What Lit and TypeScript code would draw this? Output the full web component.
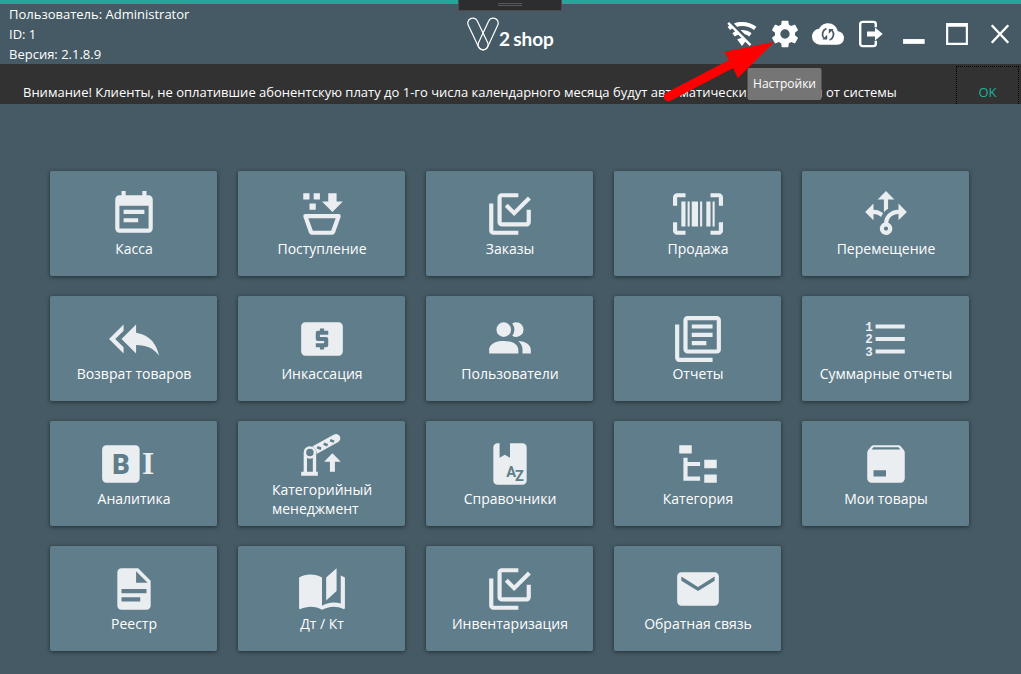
import { LitElement, html, css, svg } from "lit";
import { customElement, property } from "lit/decorators.js";

const barcode =
  "M4,6H6V18H4V6M7,6H8V18H7V6M9,6H12V18H9V6M13,6H14V18H13V6M16,6H18V18H16V6M19,6H20V18H19V6M2,4V8H0V4A2,2 0 0,1 2,2H6V4H2M22,2A2,2 0 0,1 24,4V8H22V4H18V2H22M2,16V20H6V22H2A2,2 0 0,1 0,20V16H2M22,20V16H24V20A2,2 0 0,1 22,22H18V20H22Z";
const checks =
  "M20,16V10H22V16A2,2 0 0,1 20,18H8C6.89,18 6,17.1 6,16V4C6,2.89 6.89,2 8,2H16V4H8V16H20M10.91,7.08L14,10.17L20.59,3.58L22,5L14,13L9.5,8.5L10.91,7.08M16,20V22H4A2,2 0 0,1 2,20V7H4V20H16Z";

const shape = (d: string) => svg`<path fill-rule="evenodd" d=${d}></path>`;

const icons: Record<string, unknown> = {
  register: shape(
    "M19,19H5V8H19M19,3H18V1H16V3H8V1H6V3H5C3.89,3 3,3.9 3,5V19A2,2 0 0,0 5,21H19A2,2 0 0,0 21,19V5A2,2 0 0,0 19,3M17,10H7V12H17M14,14H7V16H14"
  ),
  basket: shape(
    "M3,2H6V5H3V2M6,7H9V10H6V7M8,2H11V5H8V2M17,11L12,6H15V2H19V6H22L17,11M7.5,22C6.72,22 6.04,21.55 5.71,20.9L3.1,13.44L3,13A1,1 0 0,1 4,12H20A1,1 0 0,1 21,13L20.96,13.29L18.29,20.9C17.96,21.55 17.28,22 16.5,22H7.5M7.61,20H16.39L18.57,14H5.42L7.61,20Z"
  ),
  checks: shape(checks),
  barcode: shape(barcode),
  decision: shape(
    "M9.64,13.4C8.63,12.5 7.34,12.03 6,12V15L2,11L6,7V10C7.67,10 9.3,10.57 10.63,11.59C10.22,12.15 9.89,12.76 9.64,13.4M18,15V12C17.5,12 13.5,12.16 13.05,16.2C14.61,16.75 15.43,18.47 14.88,20.03C14.33,21.59 12.61,22.41 11.05,21.86C9.5,21.3 8.67,19.59 9.22,18.03C9.5,17.17 10.2,16.5 11.05,16.2C11.34,12.61 14.4,9.88 18,10V7L22,11L18,15M13,19A1,1 0 0,0 12,18A1,1 0 0,0 11,19A1,1 0 0,0 12,20A1,1 0 0,0 13,19M11,11.12C11.58,10.46 12.25,9.89 13,9.43V5H16L12,1L8,5H11V11.12Z"
  ),
  replyAll: shape(
    "M13,9V5L6,12L13,19V14.9C18,14.9 21.5,16.5 24,20C23,15 20,10 13,9M7,8V5L0,12L7,19V16L3,12L7,8Z"
  ),
  cash: shape(
    "M20,4H4A2,2 0 0,0 2,6V18A2,2 0 0,0 4,20H20A2,2 0 0,0 22,18V6A2,2 0 0,0 20,4M15,10H11V11H14A1,1 0 0,1 15,12V15A1,1 0 0,1 14,16H13V17H11V16H9V14H13V13H10A1,1 0 0,1 9,12V9A1,1 0 0,1 10,8H11V7H13V8H15V10Z"
  ),
  users: shape(
    "M16 17V19H2V17S2 13 9 13 16 17 16 17M12.5 7.5A3.5 3.5 0 1 0 9 11A3.5 3.5 0 0 0 12.5 7.5M15.94 13A5.32 5.32 0 0 1 18 17V19H22V17S22 13.37 15.94 13M15 4A3.39 3.39 0 0 0 13.07 4.59A5 5 0 0 1 13.07 10.41A3.39 3.39 0 0 0 15 11A3.5 3.5 0 0 0 15 4Z"
  ),
  reports: shape(
    "M16,15H9V13H16V15M19,11H9V9H19V11M19,7H9V5H19V7M3,5V21H19V23H3A2,2 0 0,1 1,21V5H3M21,1A2,2 0 0,1 23,3V17C23,18.11 22.11,19 21,19H7A2,2 0 0,1 5,17V3C5,1.89 5.89,1 7,1H21M7,3V17H21V3H7Z"
  ),
  numbers: svg`
    <path d="M7,13V11H21V13H7M7,19V17H21V19H7M7,7V5H21V7H7"></path>
    <g class="digits">
      <text x="2" y="8">1</text>
      <text x="2" y="14">2</text>
      <text x="2" y="20">3</text>
    </g>`,
  bi: svg`
    <path d="M-1.3,3H12.7A2,2 0 0,1 14.7,5V19A2,2 0 0,1 12.7,21H-1.3A2,2 0 0,1 -3.3,19V5A2,2 0 0,1 -1.3,3Z"></path>
    <text class="block cut" x="5.7" y="17">B</text>
    <text class="slab" x="18.8" y="17">I</text>`,
  gate: svg`
    <path fill-rule="evenodd" d="M3.2,20V10.8A3,3 0 0,1 9.2,10.8V20H10V22H2V20M4.8,20H7.6V13.4A3,3 0 0,1 4.8,13.4ZM6.2,9A1.8,1.8 0 1,0 6.2,12.6A1.8,1.8 0 1,0 6.2,9Z"></path>
    <path d="M7.3,7.9L17.8,2.2A2,2 0 0,1 19.8,5.7L9.4,11.5A4,4 0 0,0 7.3,7.9Z"></path>
    <path class="slit" d="M9.7,8.3L11.6,9M12.8,6.6L14.7,7.3M15.9,4.9L17.8,5.6"></path>
    <path d="M17,11.2L21,15.2H18.2V20H15.8V15.2H13Z"></path>`,
  dictionary: svg`
    <path d="M6,2H7V9L9.5,7.5L12,9V2H18A2,2 0 0,1 20,4V20A2,2 0 0,1 18,22H6A2,2 0 0,1 4,20V4A2,2 0 0,1 6,2Z"></path>
    <text class="az cut" x="12.5" y="18">A</text>
    <text class="az cut" x="16.5" y="20">Z</text>`,
  tree: shape(
    "M3,3H9V7H3V3M15,10H21V14H15V10M15,17H21V21H15V17M13,13H7V18H13V20H5V9H7V11H13V13Z"
  ),
  package: shape(
    "M5.12,5L5.93,4H17.93L18.87,5M20.54,5.23L19.15,3.55C18.88,3.21 18.47,3 18,3H6C5.53,3 5.12,3.21 4.84,3.55L3.46,5.23C3.17,5.57 3,6 3,6.5V19A2,2 0 0,0 5,21H19A2,2 0 0,0 21,19V6.5C21,6 20.83,5.57 20.54,5.23M6,18H12V15H6V18Z"
  ),
  document: shape(
    "M13,9H18.5L13,3.5V9M6,2H14L20,8V20A2,2 0 0,1 18,22H6C4.89,22 4,21.1 4,20V4C4,2.89 4.89,2 6,2M15,18V16H6V18H15M18,14V12H6V14H18Z"
  ),
  book: shape(
    "M19,2L14,6.5V17.5L19,13V2M6.5,5C4.55,5 2.45,5.4 1,6.5V21.16C1,21.41 1.25,21.66 1.5,21.66C1.6,21.66 1.65,21.59 1.75,21.59C3.1,20.94 5.05,20.5 6.5,20.5C8.45,20.5 10.55,20.9 12,22C13.35,21.15 15.8,20.5 17.5,20.5C19.15,20.5 20.85,20.81 22.25,21.56C22.35,21.61 22.4,21.59 22.5,21.59C22.75,21.59 23,21.34 23,21.09V6.5C22.4,6.05 21.75,5.75 21,5.5V19C19.9,18.65 18.7,18.5 17.5,18.5C15.8,18.5 13.35,19.15 12,20V6.5C10.55,5.4 8.45,5 6.5,5Z"
  ),
  mail: shape(
    "M20,8L12,13L4,8V6L12,11L20,6M20,4H4C2.89,4 2,4.89 2,6V18A2,2 0 0,0 4,20H20A2,2 0 0,0 22,18V6C22,4.89 21.1,4 20,4Z"
  ),
  wifiOff: shape(
    "M2.28,3L1,4.27L2.47,5.74C2.04,6 1.61,6.29 1.2,6.6L3,9C3.53,8.6 4.08,8.25 4.66,7.93L6.89,10.16C6.15,10.5 5.44,10.91 4.8,11.4L6.6,13.8C7.38,13.22 8.26,12.77 9.2,12.47L11.75,15C10.5,15.07 9.34,15.5 8.4,16.2L12,21L14.46,17.73L17.74,21L19,19.72M12,3C9.85,3 7.8,3.38 5.9,4.07L8.29,6.47C9.5,6.16 10.72,6 12,6C15.38,6 18.5,7.11 21,9L22.8,6.6C19.79,4.34 16.06,3 12,3M12,9C11.62,9 11.25,9 10.88,9.05L14.07,12.25C15.29,12.53 16.43,13.07 17.4,13.8L19.2,11.4C17.2,9.89 14.7,9 12,9Z"
  ),
  cog: shape(
    "M12,15.5A3.5,3.5 0 0,1 8.5,12A3.5,3.5 0 0,1 12,8.5A3.5,3.5 0 0,1 15.5,12A3.5,3.5 0 0,1 12,15.5M19.43,12.97C19.47,12.65 19.5,12.33 19.5,12C19.5,11.67 19.47,11.34 19.43,11L21.54,9.37C21.73,9.22 21.78,8.95 21.66,8.73L19.66,5.27C19.54,5.05 19.27,4.96 19.05,5.05L16.56,6.05C16.04,5.66 15.5,5.32 14.87,5.07L14.5,2.42C14.46,2.18 14.25,2 14,2H10C9.75,2 9.54,2.18 9.5,2.42L9.13,5.07C8.5,5.32 7.96,5.66 7.44,6.05L4.95,5.05C4.73,4.96 4.46,5.05 4.34,5.27L2.34,8.73C2.21,8.95 2.27,9.22 2.46,9.37L4.57,11C4.53,11.34 4.5,11.67 4.5,12C4.5,12.33 4.53,12.65 4.57,12.97L2.46,14.63C2.27,14.78 2.21,15.05 2.34,15.27L4.34,18.73C4.46,18.95 4.73,19.03 4.95,18.95L7.44,17.94C7.96,18.34 8.5,18.68 9.13,18.93L9.5,21.58C9.54,21.82 9.75,22 10,22H14C14.25,22 14.46,21.82 14.5,21.58L14.87,18.93C15.5,18.67 16.04,18.34 16.56,17.94L19.05,18.95C19.27,19.03 19.54,18.95 19.66,18.73L21.66,15.27C21.78,15.05 21.73,14.78 21.54,14.63L19.43,12.97Z"
  ),
  cloud: svg`
    <path d="M19.35,10.03C18.67,6.59 15.64,4 12,4C9.11,4 6.6,5.64 5.35,8.03C2.34,8.36 0,10.9 0,14A6,6 0 0,0 6,20H19A5,5 0 0,0 24,15C24,12.36 21.95,10.22 19.35,10.03Z"></path>
    <path class="sync" d="M10.8,7.9A4.6,4.6 0 0,0 9,15.2M13.2,16.5A4.6,4.6 0 0,0 15,9.2"></path>
    <path class="hole" d="M7.8,16.2H11.4V12.6ZM16.2,8.2H12.6V11.8Z"></path>`,
  exit: svg`
    <path class="line" d="M15.6,7V4.6A1.7,1.7 0 0,0 13.9,2.9H5.6A1.7,1.7 0 0,0 3.9,4.6V19.4A1.7,1.7 0 0,0 5.6,21.1H13.9A1.7,1.7 0 0,0 15.6,19.4V17"></path>
    <path d="M9,10.2H15V7.2L20.8,12L15,16.8V13.8H9Z"></path>`,
  minimize: shape("M3.8,15.8H20V19.4H3.8Z"),
  maximize: shape("M3.8,3.8H20.2V20.2H3.8ZM5.4,6.6V18.6H18.6V6.6Z"),
  close: svg`<path class="line" d="M5.8,5.4L18.2,18.6M18.2,5.4L5.8,18.6"></path>`,
};

@customElement("ui-icon")
export class UiIcon extends LitElement {
  @property() name = "";

  static styles = css`
    :host {
      display: block;
      width: 32px;
      height: 32px;
      color: inherit;
    }
    svg {
      display: block;
      width: 100%;
      height: 100%;
      fill: currentColor;
      overflow: visible;
    }
    .cut,
    .hole {
      fill: var(--hole, #455a64);
    }
    .line {
      fill: none;
      stroke: currentColor;
      stroke-width: 1.8px;
    }
    .sync {
      fill: none;
      stroke: #455a64;
      stroke-width: 1.3px;
    }
    .slit {
      stroke: var(--hole);
      stroke-width: 1.2px;
    }
    .block {
      font: 900 13px Roboto, sans-serif;
      text-anchor: middle;
    }
    .slab {
      font: 700 15px "Liberation Serif", serif;
      text-anchor: middle;
    }
    .az {
      font: 700 7px Roboto, sans-serif;
      text-anchor: middle;
    }
    .digits {
      font: 700 6px "Liberation Mono", monospace;
    }
  `;

  render() {
    return html`<svg viewBox="0 0 24 24" aria-hidden="true">${icons[this.name]}</svg>`;
  }
}

interface Entry {
  icon: string;
  label: string;
}

const tiles: Entry[] = [
  { icon: "register", label: "Касса" },
  { icon: "basket", label: "Поступление" },
  { icon: "checks", label: "Заказы" },
  { icon: "barcode", label: "Продажа" },
  { icon: "decision", label: "Перемещение" },
  { icon: "replyAll", label: "Возврат товаров" },
  { icon: "cash", label: "Инкассация" },
  { icon: "users", label: "Пользователи" },
  { icon: "reports", label: "Отчеты" },
  { icon: "numbers", label: "Суммарные отчеты" },
  { icon: "bi", label: "Аналитика" },
  { icon: "gate", label: "Категорийный\nменеджмент" },
  { icon: "dictionary", label: "Справочники" },
  { icon: "tree", label: "Категория" },
  { icon: "package", label: "Мои товары" },
  { icon: "document", label: "Реестр" },
  { icon: "book", label: "Дт / Кт" },
  { icon: "checks", label: "Инвентаризация" },
  { icon: "mail", label: "Обратная связь" },
];

const tools: Entry[] = [
  { icon: "wifiOff", label: "Нет сети" },
  { icon: "cog", label: "Настройки" },
  { icon: "cloud", label: "Синхронизация" },
  { icon: "exit", label: "Выход" },
  { icon: "minimize", label: "Свернуть" },
  { icon: "maximize", label: "Развернуть" },
  { icon: "close", label: "Закрыть" },
];

@customElement("app-root")
export class AppRoot extends LitElement {
  static styles = css`
    :host {
      display: flex;
      flex-direction: column;
      min-height: 100vh;
      background: #455a64;
      color: #fff;
      font: 13px/20px "Open Sans", "Noto Sans", sans-serif;
    }
    button {
      margin: 0;
      padding: 0;
      border: 0;
      background: none;
      color: inherit;
      font: inherit;
      cursor: pointer;
    }
    .header {
      position: relative;
      display: grid;
      grid-template-columns: 1fr auto 1fr;
      border-top: 4px solid #26a69a;
      height: 60px;
    }
    .grip {
      position: absolute;
      top: -4px;
      left: 50%;
      display: flex;
      flex-direction: column;
      align-items: center;
      gap: 1px;
      box-sizing: border-box;
      width: 104px;
      height: 11px;
      margin-left: -53px;
      padding-top: 3px;
      border: 1px solid #4a4a4c;
      border-top: 0;
      background: #2d2d30;
    }
    .grip-line {
      width: 24px;
      height: 1px;
      background: #58585b;
    }
    .user {
      padding-left: 9px;
    }
    .logo {
      display: flex;
      align-items: center;
    }
    .logo-mark {
      display: block;
      width: 32px;
      height: 34px;
      fill: none;
      stroke: #fff;
      stroke-width: 1.2px;
    }
    .logo-text {
      display: flex;
      gap: 3px;
      padding-top: 10px;
      font: 700 19px/24px Lato, sans-serif;
    }
    .tools {
      display: flex;
      justify-content: flex-end;
    }
    .tool {
      position: relative;
      display: flex;
    }
    .tool-button {
      display: flex;
      align-items: center;
      justify-content: center;
      width: 43px;
    }
    .tooltip {
      position: absolute;
      z-index: 3;
      top: 64px;
      left: 50%;
      transform: translateX(-50%);
      padding: 8px 6px;
      border-radius: 2px;
      background: #757575;
      font-size: 12px;
      line-height: 16px;
      white-space: nowrap;
    }
    .pointer {
      position: absolute;
      z-index: 2;
      top: 34px;
      right: 29px;
      width: 120px;
      height: 66px;
      fill: #f00;
      stroke: #f00;
      pointer-events: none;
    }
    .notice {
      display: flex;
      height: 40px;
      overflow: hidden;
      background: #323232;
    }
    .notice-text {
      flex: 1;
      min-width: 0;
      margin: 0;
      padding: 18px 0 0 23px;
      white-space: nowrap;
    }
    .notice-button {
      flex: none;
      box-sizing: border-box;
      width: 63px;
      height: 52px;
      margin: 2px 2px 0 0;
      border: 1px dotted #000;
      color: #1db396;
    }
    .grid {
      display: grid;
      grid-template-columns: repeat(5, 1fr);
      gap: 20px 21px;
      padding: 67px 52px 23px 50px;
    }
    .tile {
      --hole: #607d8b;
      display: flex;
      flex-direction: column;
      align-items: center;
      justify-content: center;
      min-height: 105px;
      padding-left: 1px;
      border-radius: 2px;
      background: #607d8b;
      box-shadow: 0 1px 4px rgba(0, 0, 0, 0.5);
    }
    .tile-icon {
      width: 50px;
      height: 50px;
      color: #eaeef1;
    }
    .tile-label {
      font-size: 14px;
      line-height: 19px;
      text-align: left;
      white-space: pre-line;
    }
  `;

  private renderTool(tool: Entry) {
    const active = tool.icon === "cog";
    return html`
      <div class="tool">
        <button class="tool-button" aria-label=${tool.label}>
          <ui-icon name=${tool.icon}></ui-icon>
        </button>
        ${active
          ? html`
              <svg class="pointer" viewBox="0 0 120 66" aria-hidden="true">
                <path d="M11.3 58.7L78 24" stroke-width="9" stroke-linecap="round"></path>
                <path d="M117 4L67.5 13.7L81 40Z" stroke="none"></path>
              </svg>
              <span class="tooltip" role="tooltip">${tool.label}</span>
            `
          : null}
      </div>
    `;
  }

  render() {
    return html`
      <header class="header">
        <div class="grip"><span class="grip-line"></span><span class="grip-line"></span></div>
        <div class="user">
          <div>Пользователь: Administrator</div>
          <div>ID: 1</div>
          <div>Версия: 2.1.8.9</div>
        </div>
        <div class="logo">
          <svg class="logo-mark" viewBox="0 0 32 34" aria-hidden="true">
            <path d="M10.3 3.9L20.6 25.6A5 5 0 0 1 11.6 30L1.3 8.3A5 5 0 0 1 10.3 3.9Z"></path>
            <path d="M21.7 3.9L11.6 25.6A5 5 0 0 0 20.6 30L30.7 8.3A5 5 0 0 0 21.7 3.9Z"></path>
          </svg>
          <div class="logo-text"><span>2</span><span>shop</span></div>
        </div>
        <nav class="tools">${tools.map((tool) => this.renderTool(tool))}</nav>
      </header>
      <section class="notice">
        <p class="notice-text">
          Внимание! Клиенты, не оплатившие абонентскую плату до 1-го числа календарного месяца будут
          автоматически отключены от системы
        </p>
        <button class="notice-button">OK</button>
      </section>
      <main class="grid">
        ${tiles.map(
          (tile) => html`
            <button class="tile">
              <ui-icon class="tile-icon" name=${tile.icon}></ui-icon>
              <span class="tile-label">${tile.label}</span>
            </button>
          `
        )}
      </main>
    `;
  }
}
